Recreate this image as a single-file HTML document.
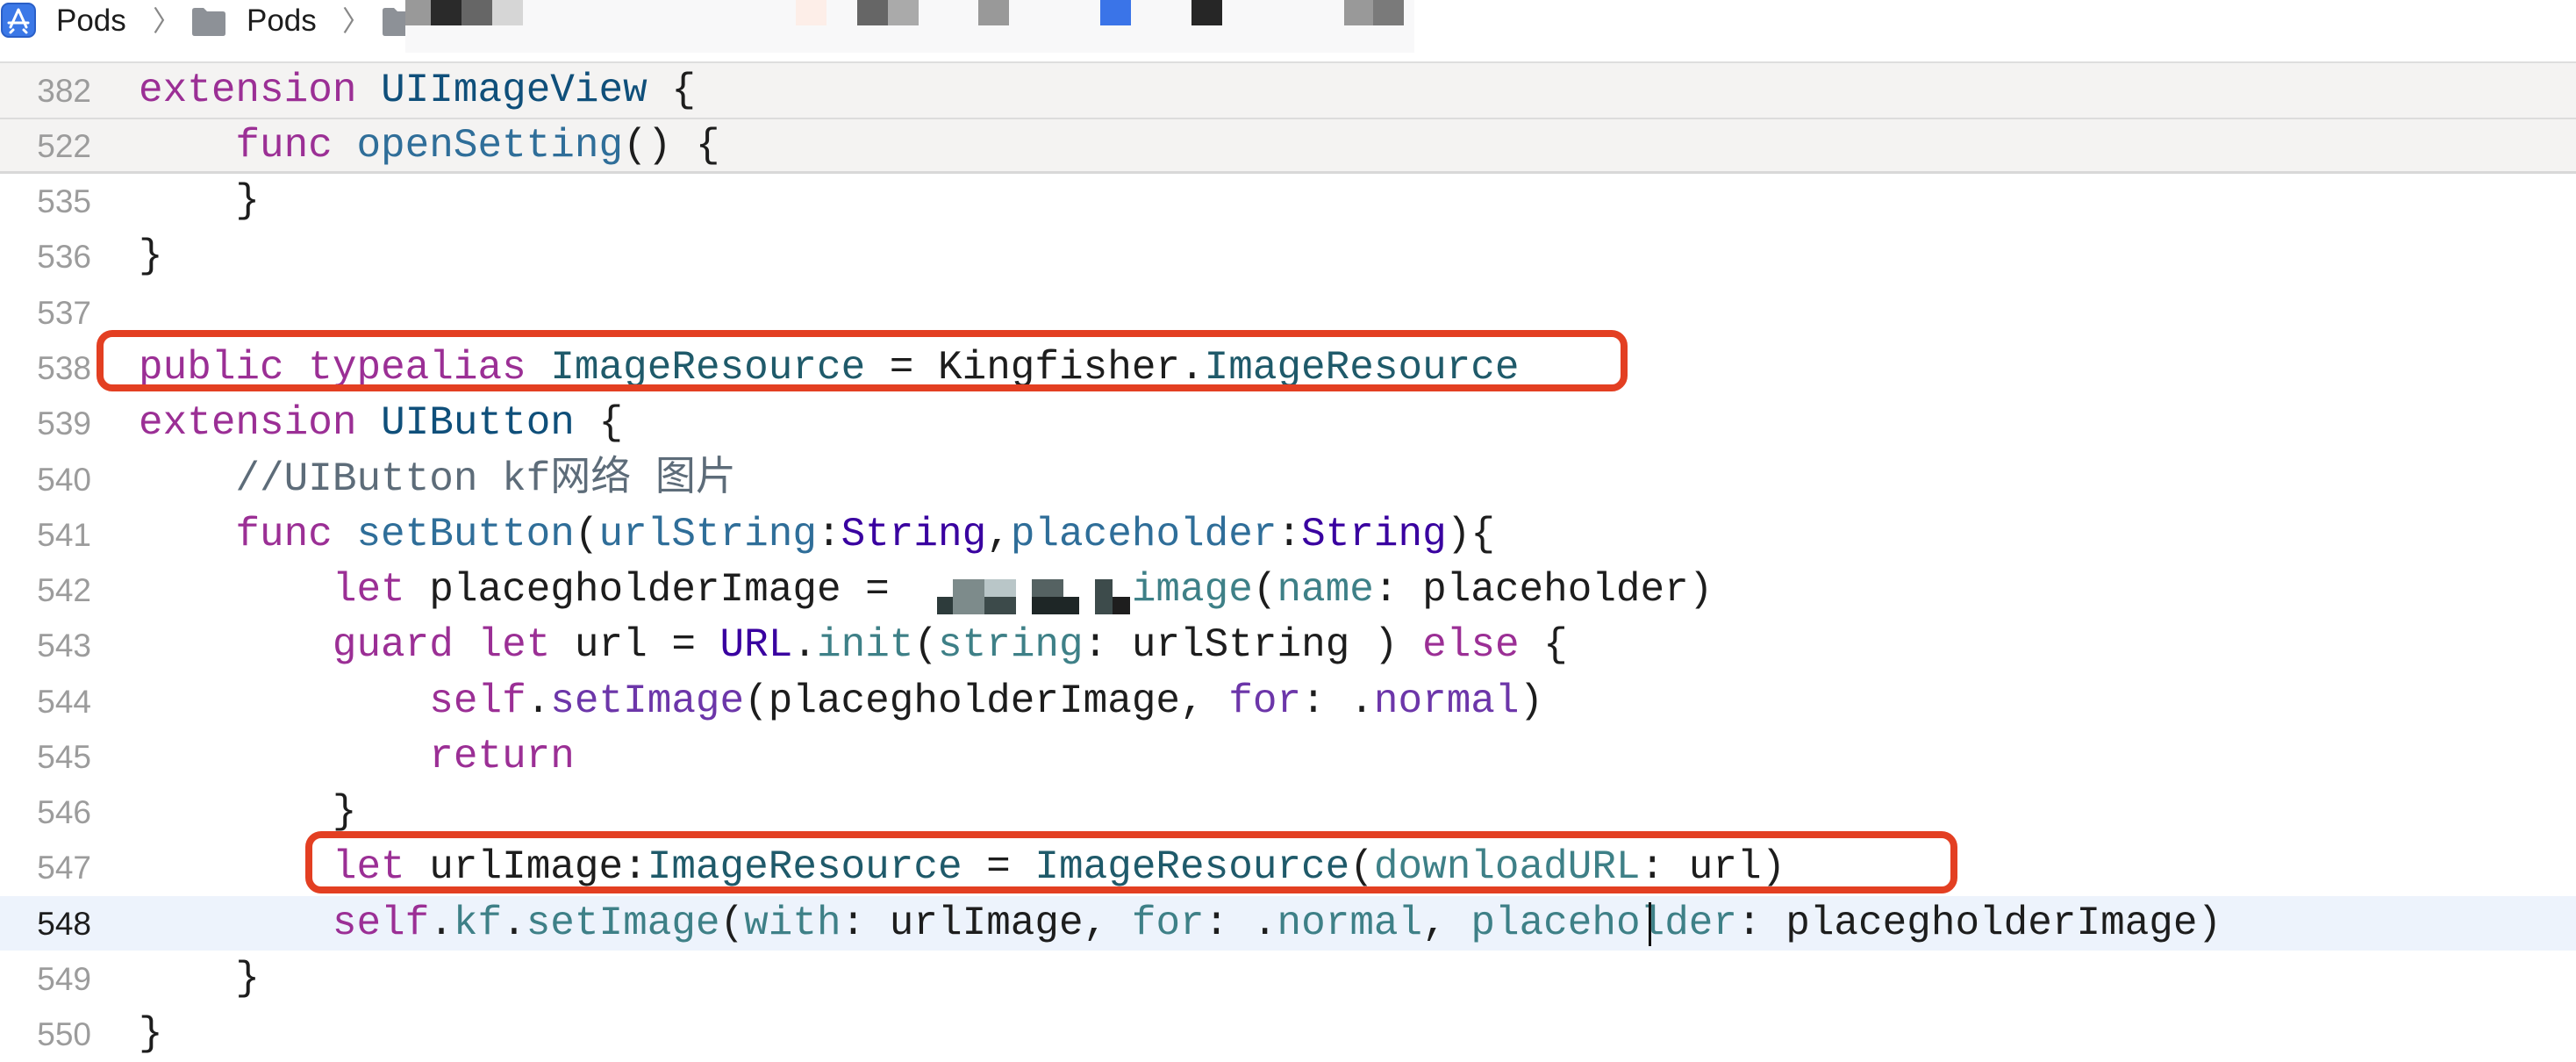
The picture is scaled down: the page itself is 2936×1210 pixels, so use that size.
<!DOCTYPE html>
<html><head><meta charset="utf-8"><style>
*{margin:0;padding:0;box-sizing:border-box}
body{width:2936px;height:1186px;background:#fff;position:relative;overflow:hidden;font-family:"Liberation Mono","Noto Sans CJK SC",monospace}
.ln{position:absolute;left:0;width:104px;text-align:right;font-family:"Liberation Sans",sans-serif;font-size:37px;color:#9c9c9c;height:63px;line-height:63px}
.cd{position:absolute;left:158px;font-size:46px;height:63px;line-height:63px;white-space:pre;color:#1d1d1d}
.k{color:#9b2f95}.t{color:#0f4f7a}.f{color:#2f6e99}.r{color:#2f6e99}.s{color:#3900a0}.m{color:#3e8087}.p{color:#6c36a9}.c{color:#5d6c79}
.blk{position:absolute;top:0;height:29px;width:35px}
.box{position:absolute;border:8px solid #e33f22;border-radius:18px}
</style></head><body>
<!-- breadcrumb -->
<svg style="position:absolute;left:0;top:2px" width="42" height="42" viewBox="0 0 42 42"><rect x="2" y="2" width="38" height="38" rx="8" fill="#3b78e7" stroke="#2a5fc7" stroke-width="2"/><path d="M21 9 L12 29 M21 9 L30 29 M10 24 H32 M15 32 l-3 3 M27 32 l3 3" stroke="#fff" stroke-width="3" fill="none" stroke-linecap="round"/></svg>
<div style="position:absolute;left:64px;top:2px;font-family:'Liberation Sans',sans-serif;font-size:35px;line-height:44px;color:#1d1d1d">Pods</div>
<div style="position:absolute;left:174px;top:2px;font-family:'Liberation Sans',sans-serif;font-size:32px;line-height:44px;color:#888">〉</div>
<svg style="position:absolute;left:217px;top:8px" width="42" height="34" viewBox="0 0 42 34"><path d="M2 4 Q2 1 5 1 H15 L19 5 H37 Q40 5 40 8 V30 Q40 33 37 33 H5 Q2 33 2 30 Z" fill="#8d9197"/></svg>
<div style="position:absolute;left:281px;top:2px;font-family:'Liberation Sans',sans-serif;font-size:35px;line-height:44px;color:#1d1d1d">Pods</div>
<div style="position:absolute;left:390px;top:2px;font-family:'Liberation Sans',sans-serif;font-size:32px;line-height:44px;color:#888">〉</div>
<svg style="position:absolute;left:434px;top:8px" width="42" height="34" viewBox="0 0 42 34"><path d="M2 4 Q2 1 5 1 H15 L19 5 H37 Q40 5 40 8 V30 Q40 33 37 33 H5 Q2 33 2 30 Z" fill="#8d9197"/></svg>
<div style="position:absolute;left:462px;top:0;width:1150px;height:60px;background:#f8f8f9"></div>
<div class="blk" style="left:462px;background:#999"></div>
<div class="blk" style="left:491px;background:#2a2a2a"></div>
<div class="blk" style="left:526px;background:#666"></div>
<div class="blk" style="left:561px;background:#d6d6d6"></div>
<div class="blk" style="left:907px;background:#fdeee8"></div>
<div class="blk" style="left:977px;background:#666"></div>
<div class="blk" style="left:1012px;background:#aaa"></div>
<div class="blk" style="left:1115px;background:#999"></div>
<div class="blk" style="left:1254px;background:#3a74e8"></div>
<div class="blk" style="left:1358px;background:#262626"></div>
<div class="blk" style="left:1532px;background:#999"></div>
<div class="blk" style="left:1565px;background:#7a7a7a"></div>
<!-- sticky header -->
<div style="position:absolute;left:0;top:70px;width:2936px;height:128px;background:#f4f3f2;border-top:2px solid #dedede;border-bottom:3px solid #d8d8d8"></div>
<div style="position:absolute;left:0;top:134px;width:2936px;height:2px;background:#dcdcdc"></div>
<!-- current line -->
<div style="position:absolute;left:0;top:1021px;width:2936px;height:62px;background:#edf3fc"></div>

<div class="ln" style="top:72px">382</div><div class="cd" style="top:72px"><span class="k">extension</span> <span class="t">UIImageView</span> {</div>
<div class="ln" style="top:135px">522</div><div class="cd" style="top:135px">    <span class="k">func</span> <span class="f">openSetting</span>() {</div>
<div class="ln" style="top:198px">535</div><div class="cd" style="top:198px">    }</div>
<div class="ln" style="top:261px">536</div><div class="cd" style="top:261px">}</div>
<div class="ln" style="top:325px">537</div>
<div class="ln" style="top:388px">538</div><div class="cd" style="top:388px"><span class="k">public</span> <span class="k">typealias</span> <span class="m" style="color:#1f5a6a">ImageResource</span> = Kingfisher.<span class="m" style="color:#1f5a6a">ImageResource</span></div>
<div class="ln" style="top:451px">539</div><div class="cd" style="top:451px"><span class="k">extension</span> <span class="t">UIButton</span> {</div>
<div class="ln" style="top:515px">540</div><div class="cd" style="top:515px">    <span class="c">//UIButton kf网络 图片</span></div>
<div class="ln" style="top:578px">541</div><div class="cd" style="top:578px">    <span class="k">func</span> <span class="f">setButton</span>(<span class="r">urlString</span>:<span class="s">String</span>,<span class="r">placeholder</span>:<span class="s">String</span>){</div>
<div class="ln" style="top:641px">542</div><div class="cd" style="top:641px">        <span class="k">let</span> placegholderImage =          <span class="m">image</span>(<span class="m">name</span>: placeholder)</div>
<div class="ln" style="top:704px">543</div><div class="cd" style="top:704px">        <span class="k">guard</span> <span class="k">let</span> url = <span class="s">URL</span>.<span class="m">init</span>(<span class="m">string</span>: urlString ) <span class="k">else</span> {</div>
<div class="ln" style="top:768px">544</div><div class="cd" style="top:768px">            <span class="k">self</span>.<span class="p">setImage</span>(placegholderImage, <span class="p">for</span>: .<span class="p">normal</span>)</div>
<div class="ln" style="top:831px">545</div><div class="cd" style="top:831px">            <span class="k">return</span></div>
<div class="ln" style="top:894px">546</div><div class="cd" style="top:894px">        }</div>
<div class="ln" style="top:957px">547</div><div class="cd" style="top:957px">        <span class="k">let</span> urlImage:<span class="m" style="color:#1f5a6a">ImageResource</span> = <span class="m" style="color:#1f5a6a">ImageResource</span>(<span class="m">downloadURL</span>: url)</div>
<div class="ln" style="top:1021px;color:#1d1d1d">548</div><div class="cd" style="top:1021px">        <span class="k">self</span>.<span class="m">kf</span>.<span class="m">setImage</span>(<span class="m">with</span>: urlImage, <span class="m">for</span>: .<span class="m">normal</span>, <span class="m">placeholder</span>: placegholderImage)</div>
<div style="position:absolute;left:1879px;top:1028px;width:3px;height:50px;background:#111"></div>
<div class="ln" style="top:1084px">549</div><div class="cd" style="top:1084px">    }</div>
<div class="ln" style="top:1147px">550</div><div class="cd" style="top:1147px">}</div>

<!-- blurred blocks line 542 -->
<div style="position:absolute;left:1068px;top:660px;width:224px;height:40px">
<div style="position:absolute;left:0;top:20px;width:18px;height:20px;background:#2d3b3b"></div>
<div style="position:absolute;left:18px;top:0;width:36px;height:40px;background:#7d8b8b"></div>
<div style="position:absolute;left:54px;top:0;width:36px;height:40px;background:#b9c6c8"></div>
<div style="position:absolute;left:54px;top:20px;width:36px;height:20px;background:#3c4a4a"></div>
<div style="position:absolute;left:108px;top:0;width:36px;height:40px;background:#556262"></div>
<div style="position:absolute;left:108px;top:20px;width:54px;height:20px;background:#1e2626"></div>
<div style="position:absolute;left:180px;top:0;width:20px;height:40px;background:#3d4b4b"></div>
<div style="position:absolute;left:200px;top:20px;width:20px;height:20px;background:#1e1e1e"></div>
</div>

<div class="box" style="left:110px;top:376px;width:1745px;height:70px"></div>
<div class="box" style="left:348px;top:947px;width:1883px;height:71px"></div>
</body></html>
